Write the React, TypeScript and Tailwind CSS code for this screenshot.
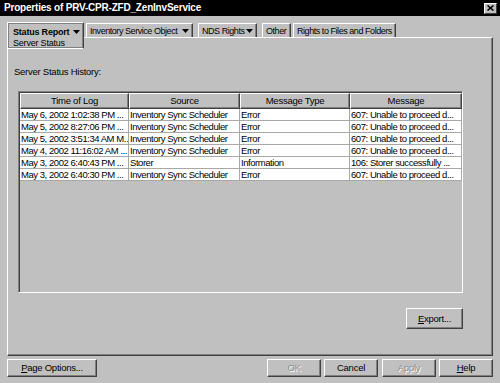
import React from 'react';

const rows = [
  ['May 6, 2002 1:02:38 PM ...', 'Inventory Sync Scheduler', 'Error', '607: Unable to proceed d...'],
  ['May 5, 2002 8:27:06 PM ...', 'Inventory Sync Scheduler', 'Error', '607: Unable to proceed d...'],
  ['May 5, 2002 3:51:34 AM M...', 'Inventory Sync Scheduler', 'Error', '607: Unable to proceed d...'],
  ['May 4, 2002 11:16:02 AM ...', 'Inventory Sync Scheduler', 'Error', '607: Unable to proceed d...'],
  ['May 3, 2002 6:40:43 PM ...', 'Storer', 'Information', '106: Storer successfully ...'],
  ['May 3, 2002 6:40:30 PM ...', 'Inventory Sync Scheduler', 'Error', '607: Unable to proceed d...'],
];

const cols = ['Time of Log', 'Source', 'Message Type', 'Message'];

function Arrow() {
  return (
    <svg width="7" height="4" viewBox="0 0 7 4" className="shrink-0">
      <path d="M0 0h7L3.5 4z" fill="#000" />
    </svg>
  );
}

function Tab({ label, drop, w }: { label: string; drop?: boolean; w: string }) {
  return (
    <div
      className={`${w} h-[14px] mt-[1px] flex items-center justify-between pl-[3px] pr-[3px] border-t border-l border-r border-t-white border-l-white border-r-[#404040] shadow-[inset_-1px_0_0_#808080] whitespace-nowrap overflow-hidden text-[9px] tracking-[-0.45px]`}
    >
      <span>{label}</span>
      {drop && <Arrow />}
    </div>
  );
}

function Btn({ children, w, disabled }: { children: React.ReactNode; w: string; disabled?: boolean }) {
  return (
    <div
      className={`${w} h-full flex items-center justify-center border border-t-white border-l-white border-r-[#404040] border-b-[#404040] shadow-[inset_-1px_-1px_0_#808080] ${
        disabled ? 'text-[#8c8c8c] [text-shadow:1px_1px_0_#fff]' : 'text-black'
      }`}
    >
      {children}
    </div>
  );
}

export default function App() {
  return (
    <div className="w-[500px] h-[383px] bg-[#c0c0c0] flex flex-col overflow-hidden text-[9.5px] tracking-[-0.25px] text-black font-['Liberation_Sans',Arial,sans-serif] leading-[12px]">
      {/* Title bar */}
      <div className="h-[16px] bg-black flex items-center justify-between pl-[4px] pr-[3px] shrink-0">
        <span className="text-white font-bold text-[10px] tracking-[-0.2px]">Properties of PRV-CPR-ZFD_ZenInvService</span>
        <div className="w-[13px] h-[11px] bg-[#c0c0c0] flex items-center justify-center border border-t-white border-l-white border-r-[#404040] border-b-[#404040]">
          <svg width="7" height="6" viewBox="0 0 7 6">
            <path d="M0.5 0.5l6 5M6.5 0.5l-6 5" stroke="#000" strokeWidth="1.6" />
          </svg>
        </div>
      </div>

      {/* Tabs */}
      <div className="h-[15px] mt-[6px] px-[7px] flex items-start gap-[2px] shrink-0">
        <div className="relative z-10 w-[77px] h-[27px] bg-[#c0c0c0] border-t border-l border-b border-r border-t-white border-l-white border-b-white border-r-[#404040]">
          <div className="h-full border border-[#808080] pl-[4px] pr-[2px] pt-[2px] flex flex-col text-[9px] tracking-[-0.2px]">
            <div className="flex items-center justify-between h-[11px]">
              <span className="font-bold">Status Report</span>
              <Arrow />
            </div>
            <span className="leading-[12px]">Server Status</span>
          </div>
        </div>
        <Tab label="Inventory Service Object" drop w="w-[107px]" />
        <div className="w-[1px]" />
        <Tab label="NDS Rights" drop w="w-[59px]" />
        <div className="w-[1px]" />
        <Tab label="Other" w="w-[29px]" />
        <Tab label="Rights to Files and Folders" w="w-[103px]" />
      </div>

      {/* Panel */}
      <div className="mx-[7px] flex-1 border border-t-white border-l-white border-r-[#404040] border-b-[#404040] shadow-[inset_-1px_-1px_0_#808080] flex flex-col">
        <div className="pl-[6px] pt-[28px]">Server Status History:</div>
        <div className="ml-[10px] w-[445px] flex flex-col">
          {/* Table */}
          <div className="mt-[13px] h-[202px] border border-t-[#808080] border-l-[#808080] border-r-white border-b-white">
            <div className="h-full border-t border-l border-t-[#404040] border-l-[#404040] bg-[#c0c0c0]">
              <div className="grid grid-cols-[109px_111px_110px_1fr]">
                {cols.map((c) => (
                  <div
                    key={c}
                    className="h-[16px] flex items-center justify-center border-t border-l border-r border-b border-t-white border-l-white border-r-[#404040] border-b-[#404040] shadow-[inset_-1px_-1px_0_#808080]"
                  >
                    {c}
                  </div>
                ))}
              </div>
              {rows.map((r, i) => (
                <div key={i} className="grid grid-cols-[109px_111px_110px_1fr] bg-white">
                  {r.map((c, j) => (
                    <div
                      key={j}
                      className="h-[12px] pl-[1px] overflow-hidden whitespace-nowrap border-r border-b border-[#a8a8a8] leading-[11px] tracking-[-0.45px]"
                    >
                      {c}
                    </div>
                  ))}
                </div>
              ))}
            </div>
          </div>
          <div className="mt-[15px] h-[21px] flex justify-end">
            <Btn w="w-[57px]">
              <span>
                <span className="underline">E</span>xport...
              </span>
            </Btn>
          </div>
        </div>
      </div>

      {/* Bottom buttons */}
      <div className="h-[18px] mt-[3px] mb-[6px] px-[7px] flex items-stretch shrink-0">
        <Btn w="w-[90px]">
          <span>
            <span className="underline">P</span>age Options...
          </span>
        </Btn>
        <div className="flex-1" />
        <div className="flex gap-[3px]">
          <Btn w="w-[54px]" disabled>
            OK
          </Btn>
          <Btn w="w-[54px]">Cancel</Btn>
          <div className="w-[1px] -ml-[3px]" />
          <Btn w="w-[54px]" disabled>
            Apply
          </Btn>
          <Btn w="w-[54px]">
            <span>
              <span className="underline">H</span>elp
            </span>
          </Btn>
        </div>
      </div>
    </div>
  );
}
